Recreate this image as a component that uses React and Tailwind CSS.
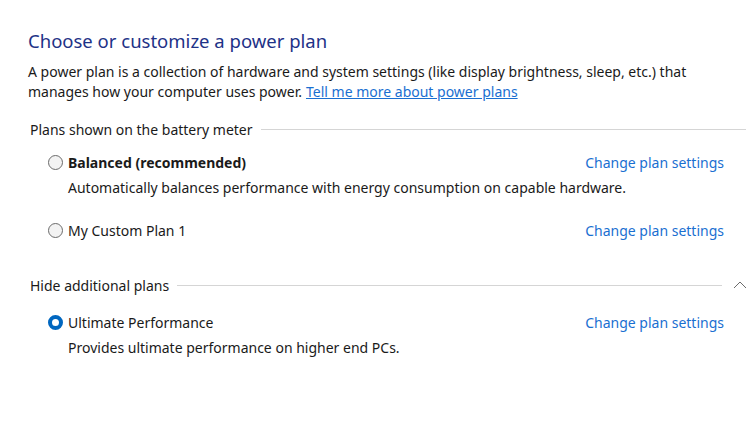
import React from "react";

const font = { fontFamily: '"Noto Sans", "Open Sans", sans-serif' };

const Radio = ({ checked }) =>
  checked ? (
    <span className="w-[15px] h-[15px] rounded-full border-[4px] border-[#0067c0] bg-white shrink-0" />
  ) : (
    <span className="w-[15px] h-[15px] rounded-full border border-[#6b6b6b] bg-[#f3f3f3] shrink-0" />
  );

const SectionHeader = ({ label, chevron }) => (
  <div className={`flex items-center h-[20px] pl-[30px] ${chevron ? "" : "pr-[10px]"}`}>
    <span className="text-[14px] text-[#1a1a1a] whitespace-nowrap">{label}</span>
    <div className="flex-1 h-px bg-[#d5d5d5] ml-[8px]" />
    {chevron ? (
      <svg width="24" height="20" viewBox="0 0 24 20" className="ml-[6px] mr-[4px]">
        <path d="M6 13 L12 7 L18 13" fill="none" stroke="#6b6b6b" strokeWidth="1" />
      </svg>
    ) : null}
  </div>
);

const Plan = ({ name, desc, bold, checked }) => (
  <div className="pl-[48px] pr-[32px]">
    <div className="flex items-center h-[20px]">
      <Radio checked={checked} />
      <span className={`ml-[5px] text-[14px] text-[#1a1a1a] ${bold ? "font-bold" : ""}`}>{name}</span>
      <span className="ml-auto text-[14px] text-[#1a6fd1]">Change plan settings</span>
    </div>
    {desc ? <div className="pl-[20px] mt-[6px] text-[14px] leading-[20px] text-[#1a1a1a]">{desc}</div> : null}
  </div>
);

export default function App() {
  return (
    <div className="w-[756px] h-[445px] bg-white overflow-hidden" style={font}>
      <div className="pt-[28px] pl-[28px]">
        <h1 className="text-[18.5px] leading-[26px] text-[#1e3287]">Choose or customize a power plan</h1>
        <div className="mt-[8px] text-[14px] leading-[20px] text-[#1a1a1a] w-[700px]">
          <div>A power plan is a collection of hardware and system settings (like display brightness, sleep, etc.) that</div>
          <div className="flex gap-[4px]">
            <span>manages how your computer uses power.</span>
            <span className="text-[#1a6fd1] underline">Tell me more about power plans</span>
          </div>
        </div>
      </div>
      <div className="mt-[17px]">
        <SectionHeader label="Plans shown on the battery meter" />
      </div>
      <div className="mt-[13px]">
        <Plan name="Balanced (recommended)" bold desc="Automatically balances performance with energy consumption on capable hardware." />
      </div>
      <div className="mt-[22px]">
        <Plan name="My Custom Plan 1" />
      </div>
      <div className="mt-[35px]">
        <SectionHeader label="Hide additional plans" chevron />
      </div>
      <div className="mt-[17px]">
        <Plan name="Ultimate Performance" checked desc="Provides ultimate performance on higher end PCs." />
      </div>
    </div>
  );
}
